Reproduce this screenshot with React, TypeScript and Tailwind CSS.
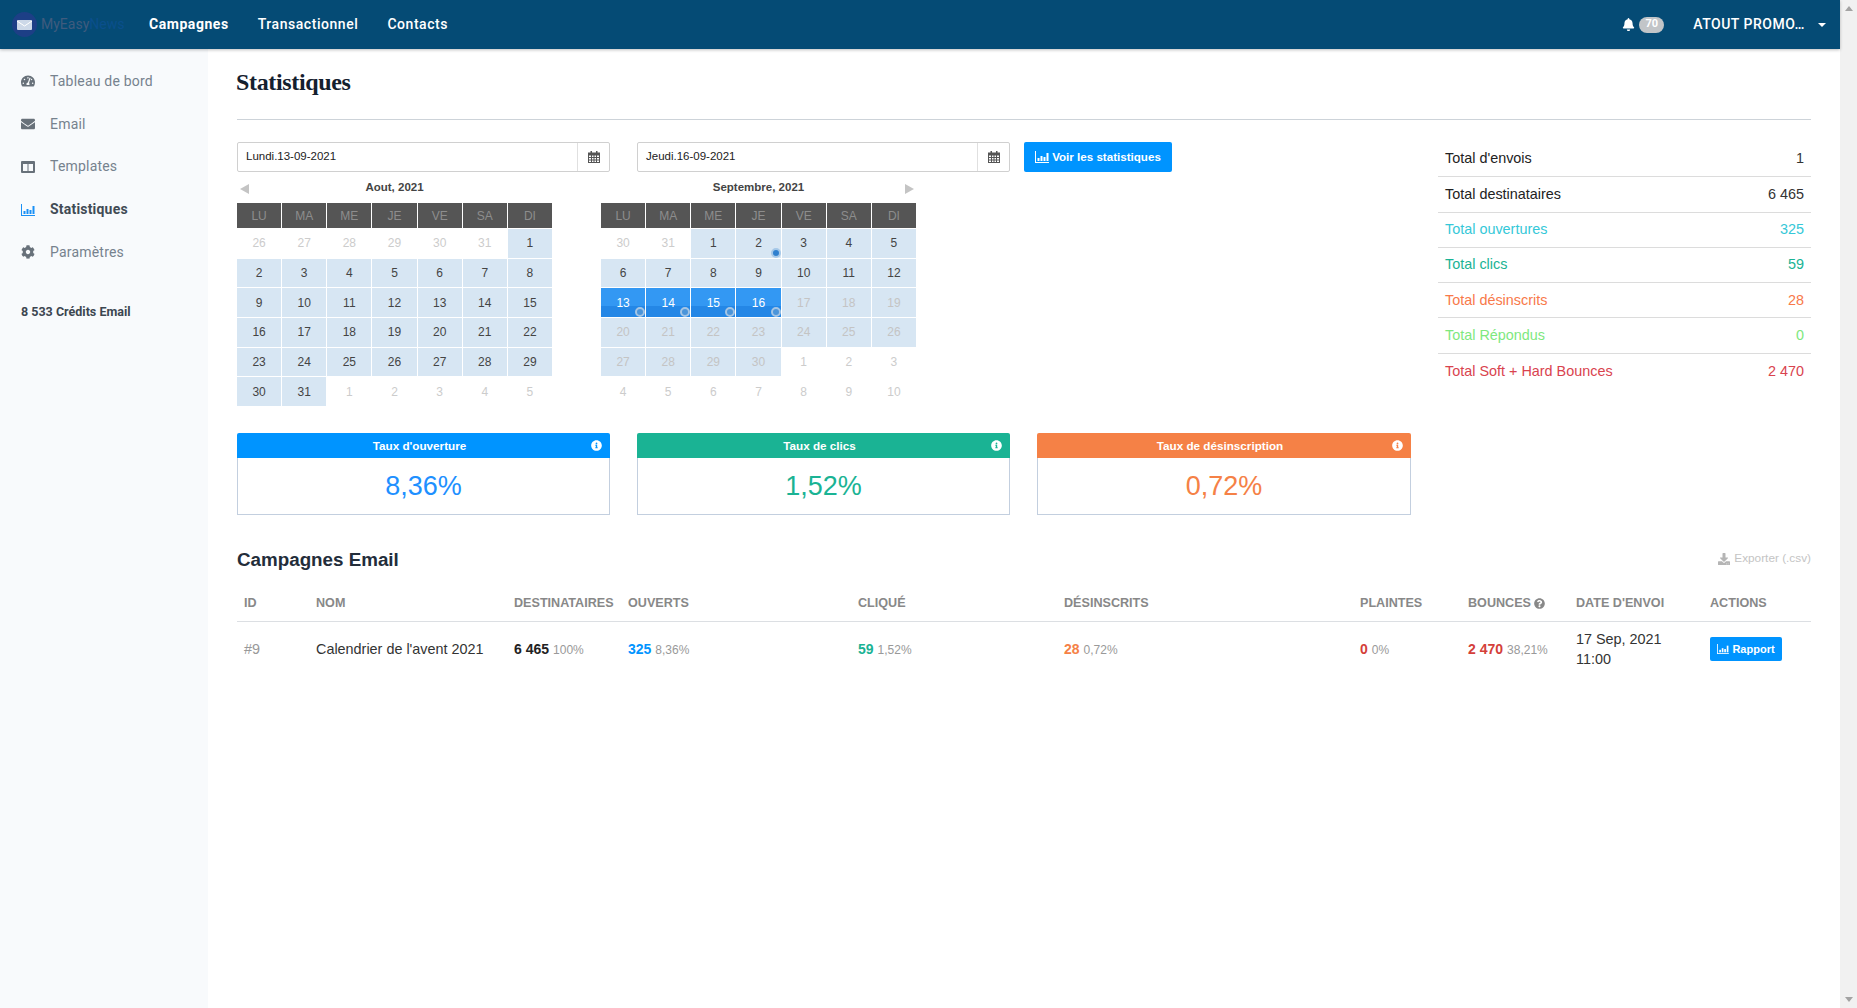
import { FaTachometerAlt, FaEnvelope, FaCog, FaBell, FaDownload, FaInfoCircle, FaQuestionCircle } from "react-icons/fa";

type Cell = { d: number; bg?: boolean; muted?: boolean; sel?: boolean; dot?: boolean };

const days = ["LU", "MA", "ME", "JE", "VE", "SA", "DI"];

const aug: Cell[] = [
  ...[26, 27, 28, 29, 30, 31].map((d) => ({ d, muted: true })),
  ...Array.from({ length: 31 }, (_, i) => ({ d: i + 1, bg: true })),
  ...[1, 2, 3, 4, 5].map((d) => ({ d, muted: true })),
];

const sep: Cell[] = [
  ...[30, 31].map((d) => ({ d, muted: true })),
  ...Array.from({ length: 12 }, (_, i) => ({ d: i + 1, bg: true, dot: i + 1 === 2 })),
  ...[13, 14, 15, 16].map((d) => ({ d, bg: true, sel: true })),
  ...Array.from({ length: 14 }, (_, i) => ({ d: i + 17, bg: true, muted: true })),
  ...[1, 2, 3, 4, 5, 6, 7, 8, 9, 10].map((d) => ({ d, muted: true })),
];

function BarChartIcon({ w = 14, h = 12, color = "currentColor" }: { w?: number; h?: number; color?: string }) {
  return (
    <svg width={w} height={h} viewBox="0 0 14 12" fill={color}>
      <rect x="0" y="0" width="1" height="12" />
      <rect x="0" y="11" width="14" height="1" />
      <rect x="2.5" y="7" width="2" height="3" />
      <rect x="5.5" y="5" width="2" height="5" />
      <rect x="8.5" y="6" width="2" height="4" />
      <rect x="11.5" y="2" width="2" height="8" />
    </svg>
  );
}

function ColumnsIcon() {
  return (
    <svg width="14" height="12" viewBox="0 0 14 12">
      <path fillRule="evenodd" fill="currentColor" d="M1 0h12a1 1 0 0 1 1 1v10a1 1 0 0 1-1 1H1a1 1 0 0 1-1-1V1a1 1 0 0 1 1-1zM2 3v7h4.5V3zM7.5 3v7H12V3z" />
    </svg>
  );
}

function CalendarIcon() {
  return (
    <svg width="12" height="12" viewBox="0 0 12 12" fill="#555555">
      <path fillRule="evenodd" d="M0 1.5h12V12H0zM1 4.5v1.5h2V4.5zM4 4.5v1.5h1.5V4.5zM6.5 4.5v1.5H8V4.5zM9 4.5v1.5h2V4.5zM1 7v1.5h2V7zM4 7v1.5h1.5V7zM6.5 7v1.5H8V7zM9 7v1.5h2V7zM1 9.5V11h2V9.5zM4 9.5V11h1.5V9.5zM6.5 9.5V11H8V9.5zM9 9.5V11h2V9.5z" />
      <rect x="2.5" y="0" width="1.5" height="3" />
      <rect x="8" y="0" width="1.5" height="3" />
    </svg>
  );
}

function DayCell({ c }: { c: Cell }) {
  const tone = c.sel
    ? "bg-gradient-to-b from-[#3398f3] from-62% to-[#2487e6] to-62% text-white"
    : c.bg
      ? c.muted
        ? "bg-[#d7e6f3] text-[#c4c4c4]"
        : "bg-[#d7e6f3] text-[#444444]"
      : "bg-white text-[#cccccc]";
  return (
    <div className={`relative flex items-center justify-center text-[12px] ${tone}`}>
      {c.d}
      {c.sel && (
        <span className="absolute bottom-0 right-0 h-[10px] w-[10px] rounded-full border-2 border-[#a5c5e4] bg-[#4b95da]" />
      )}
      {c.dot && (
        <span className="absolute bottom-0 right-0 h-[10px] w-[10px] rounded-full border-2 border-[#a5c8e8] bg-[#2f80cf]" />
      )}
    </div>
  );
}

function Calendar({ title, cells, prev, next }: { title: string; cells: Cell[]; prev?: boolean; next?: boolean }) {
  return (
    <div className="w-[315px]">
      <div className="grid h-[31px] grid-cols-[20px_1fr_20px] items-center">
        <div className="flex justify-start pl-[3px] pt-[2px]">
          {prev && (
            <svg width="9" height="10" viewBox="0 0 9 10">
              <polygon points="9,0 9,10 0,5" fill="#c4c4c4" />
            </svg>
          )}
        </div>
        <div className="text-center text-[11.5px] font-bold text-[#444444]">{title}</div>
        <div className="flex justify-end pr-[2px] pt-[2px]">
          {next && (
            <svg width="9" height="10" viewBox="0 0 9 10">
              <polygon points="0,0 0,10 9,5" fill="#c4c4c4" />
            </svg>
          )}
        </div>
      </div>
      <div className="grid h-[25px] grid-cols-7 gap-x-px">
        {days.map((d) => (
          <div key={d} className="flex items-center justify-center bg-[#555555] text-[12px] text-[#8d8d8d]">
            {d}
          </div>
        ))}
      </div>
      <div className="mt-px grid h-[177px] grid-cols-7 grid-rows-6 gap-px">
        {cells.map((c, i) => (
          <DayCell key={i} c={c} />
        ))}
      </div>
    </div>
  );
}

function DateInput({ value }: { value: string }) {
  return (
    <div className="flex h-[30px] w-[373px] rounded-[2px] border border-[#d0d0d0]">
      <div className="flex flex-1 items-center border-r border-[#e0e0e0] pl-2 text-[11.5px] text-[#222222]">{value}</div>
      <div className="flex w-[31px] items-center justify-center">
        <CalendarIcon />
      </div>
    </div>
  );
}

function RateCard({ title, value, head, text, wide }: { title: string; value: string; head: string; text: string; wide?: boolean }) {
  return (
    <div className={wide ? "w-[374px]" : "w-[373px]"}>
      <div className={`relative flex h-[25px] items-center justify-center rounded-t-[2px] pr-[8px] text-[11.7px] font-bold text-white ${head}`}>
        {title}
        <FaInfoCircle className="absolute right-[8px] top-[7px] text-[11px]" />
      </div>
      <div className={`flex h-[57px] items-center justify-center border border-t-0 border-[#c3cfdf] text-[27px] ${text}`}>
        {value}
      </div>
    </div>
  );
}

const totals = [
  ["Total d'envois", "1", "text-[#222222]", "text-[#333333]"],
  ["Total destinataires", "6 465", "text-[#222222]", "text-[#333333]"],
  ["Total ouvertures", "325", "text-[#35c8d8]", "text-[#35c8d8]"],
  ["Total clics", "59", "text-[#1ab394]", "text-[#1ab394]"],
  ["Total désinscrits", "28", "text-[#f8794a]", "text-[#f8794a]"],
  ["Total Répondus", "0", "text-[#7ee87e]", "text-[#7ee87e]"],
  ["Total Soft + Hard Bounces", "2 470", "text-[#d9434e]", "text-[#d9434e]"],
];

const nav = [
  { label: "Tableau de bord", icon: <FaTachometerAlt /> },
  { label: "Email", icon: <FaEnvelope /> },
  { label: "Templates", icon: <ColumnsIcon /> },
  { label: "Statistiques", icon: <BarChartIcon />, active: true },
  { label: "Paramètres", icon: <FaCog /> },
];

const th = "px-[7px] text-left align-middle text-[12.6px] font-bold text-[#888888]";
const td = "px-[7px] pt-[2px]";

function Metric({ n, p, color }: { n: string; p: string; color: string }) {
  return (
    <span className="whitespace-nowrap">
      <b className={`text-[14px] ${color}`}>{n}</b> <span className="text-[12px] text-[#999999]">{p}</span>
    </span>
  );
}

export default function App() {
  return (
    <div className="flex h-[1008px] w-[1857px] overflow-hidden bg-white font-['Liberation_Sans',sans-serif]">
      <div className="flex w-[1840px] flex-col">
        <header className="relative z-10 flex h-[49px] shrink-0 items-center bg-[#054b75] pl-[12px] pr-[14px] font-['Roboto',sans-serif] shadow-[0_1px_3px_rgba(0,0,0,0.25)]">
          <div className="flex w-[137px] items-center gap-[4px]">
            <div className="flex h-[25px] w-[25px] items-center justify-center rounded-full bg-[#1d3f86]">
              <svg width="15" height="10" viewBox="0 0 15 10">
                <rect width="15" height="10" rx="1" fill="#ccd8e8" />
                <path d="M0 1 L7.5 6 L15 1" fill="none" stroke="#ffffff" strokeWidth="1" />
              </svg>
            </div>
            <span className="text-[14px] text-[#3f5b7e]">
              MyEasy<span className="text-[#0a4f8c]">News</span>
            </span>
          </div>
          <nav className="flex gap-[29px] text-[14px] tracking-[0.55px] text-white">
            <span className="font-bold">Campagnes</span>
            <span className="font-medium">Transactionnel</span>
            <span className="font-medium">Contacts</span>
          </nav>
          <div className="ml-auto flex items-center text-white">
            <FaBell className="text-[13px]" />
            <span className="ml-[4px] flex h-[16px] w-[25px] items-center justify-center rounded-full bg-[#c2c5c8] text-[11px] font-bold">70</span>
            <span className="ml-[29px] text-[14px] font-medium tracking-[0.5px]">ATOUT PROMO…</span>
            <svg className="ml-[13px]" width="8" height="4" viewBox="0 0 8 4">
              <polygon points="0,0 8,0 4,4" fill="#ffffff" />
            </svg>
          </div>
        </header>
        <div className="flex min-h-0 flex-1">
          <aside className="w-[208px] shrink-0 bg-[#f8fafc] pl-[21px] pt-[11px] font-['Roboto',sans-serif]">
            {nav.map((n) => (
              <div key={n.label} className="flex h-[42.75px] items-center text-[14px] tracking-[0.2px]">
                <span className={`flex w-[29px] text-[14px] ${n.active ? "text-[#1a90f5]" : "text-[#68717a]"}`}>{n.icon}</span>
                <span className={n.active ? "font-bold text-[#414b55]" : "text-[#76828e]"}>{n.label}</span>
              </div>
            ))}
            <div className="mt-[29px] text-[12.5px] font-bold text-[#3c4650]">8 533 Crédits Email</div>
          </aside>
          <main className="min-w-0 flex-1 px-[29px]">
            <div className="flex h-[71px] items-center border-b border-[#cdd3d9] pb-[5px]">
              <h1 className="-ml-px font-['Liberation_Serif',serif] text-[24px] font-bold tracking-[-0.35px] text-[#14202e]">Statistiques</h1>
            </div>
            <div className="flex justify-between pt-[21px]">
              <div className="w-[1174px] pt-px">
                <div className="flex items-center">
                  <DateInput value="Lundi.13-09-2021" />
                  <div className="ml-[27px]">
                    <DateInput value="Jeudi.16-09-2021" />
                  </div>
                  <button className="ml-[14px] flex h-[30px] w-[148px] items-center justify-center gap-[3px] rounded-[2px] bg-[#0094ff] text-[11.6px] font-bold text-white">
                    <BarChartIcon w={14} h={12} />
                    Voir les statistiques
                  </button>
                </div>
                <div className="flex gap-[49px]">
                  <Calendar title="Aout, 2021" cells={aug} prev />
                  <Calendar title="Septembre, 2021" cells={sep} next />
                </div>
                <div className="mt-[27px] flex gap-[27px]">
                  <RateCard title="Taux d'ouverture" value="8,36%" head="bg-[#0094ff]" text="text-[#1e90ff]" />
                  <RateCard title="Taux de clics" value="1,52%" head="bg-[#1ab394]" text="text-[#1ab394]" />
                  <RateCard title="Taux de désinscription" value="0,72%" head="bg-[#f58146]" text="text-[#f58146]" wide />
                </div>
              </div>
              <div className="w-[373px] self-start pt-px">
                {totals.map(([l, v, a, b], i) => (
                  <div key={l} className={`flex h-[35.3px] items-center justify-between px-[7px] text-[14.4px] ${i < 6 ? "border-b border-[#dcdcdc]" : ""}`}>
                    <span className={a}>{l}</span>
                    <span className={b}>{v}</span>
                  </div>
                ))}
              </div>
            </div>
            <div className="mt-[32px] flex h-[26px] items-center justify-between">
              <h2 className="text-[18.8px] font-bold text-[#232d3a]">Campagnes Email</h2>
              <span className="flex items-center gap-[4px] pb-[3px] text-[11.8px] text-[#c4c4c4]">
                <FaDownload className="text-[12px] text-[#b5b5b5]" />
                Exporter (.csv)
              </span>
            </div>
            <table className="mt-[13px] w-[1574px] table-fixed border-collapse">
              <colgroup>
                <col className="w-[72px]" />
                <col className="w-[198px]" />
                <col className="w-[114px]" />
                <col className="w-[230px]" />
                <col className="w-[206px]" />
                <col className="w-[296px]" />
                <col className="w-[108px]" />
                <col className="w-[108px]" />
                <col className="w-[134px]" />
                <col className="w-[108px]" />
              </colgroup>
              <thead>
                <tr className="h-[35px] border-b border-[#dcdfe3]">
                  <th className={th}>ID</th>
                  <th className={th}>NOM</th>
                  <th className={th}>DESTINATAIRES</th>
                  <th className={th}>OUVERTS</th>
                  <th className={th}>CLIQUÉ</th>
                  <th className={th}>DÉSINSCRITS</th>
                  <th className={th}>PLAINTES</th>
                  <th className={th}>
                    <span className="flex items-center gap-[3px]">
                      BOUNCES <FaQuestionCircle className="text-[11px]" />
                    </span>
                  </th>
                  <th className={th}>DATE D'ENVOI</th>
                  <th className={th}>ACTIONS</th>
                </tr>
              </thead>
              <tbody>
                <tr className="h-[56px] text-[14.4px]">
                  <td className={`${td} text-[#999999]`}>#9</td>
                  <td className={`${td} text-[#333333]`}>Calendrier de l'avent 2021</td>
                  <td className={td}><Metric n="6 465" p="100%" color="text-[#222222]" /></td>
                  <td className={td}><Metric n="325" p="8,36%" color="text-[#0094ff]" /></td>
                  <td className={td}><Metric n="59" p="1,52%" color="text-[#1ab394]" /></td>
                  <td className={td}><Metric n="28" p="0,72%" color="text-[#f58146]" /></td>
                  <td className={td}><Metric n="0" p="0%" color="text-[#d43f3a]" /></td>
                  <td className={td}><Metric n="2 470" p="38,21%" color="text-[#d43f3a]" /></td>
                  <td className="px-[7px] leading-[20px] text-[#333333]">17 Sep, 2021<br />11:00</td>
                  <td className="px-[7px]">
                    <button className="flex h-[24px] w-[72px] items-center justify-center gap-[3px] rounded-[2px] bg-[#0094ff] text-[11px] font-bold text-white">
                      <BarChartIcon w={12} h={10} />
                      Rapport
                    </button>
                  </td>
                </tr>
              </tbody>
            </table>
          </main>
        </div>
      </div>
      <div className="flex w-[17px] shrink-0 flex-col items-center justify-between bg-[#f1f1f1] py-[6px]">
        <svg width="8" height="5" viewBox="0 0 8 5"><polygon points="4,0 8,5 0,5" fill="#a3a3a3" /></svg>
        <svg width="8" height="5" viewBox="0 0 8 5"><polygon points="0,0 8,0 4,5" fill="#a3a3a3" /></svg>
      </div>
    </div>
  );
}
